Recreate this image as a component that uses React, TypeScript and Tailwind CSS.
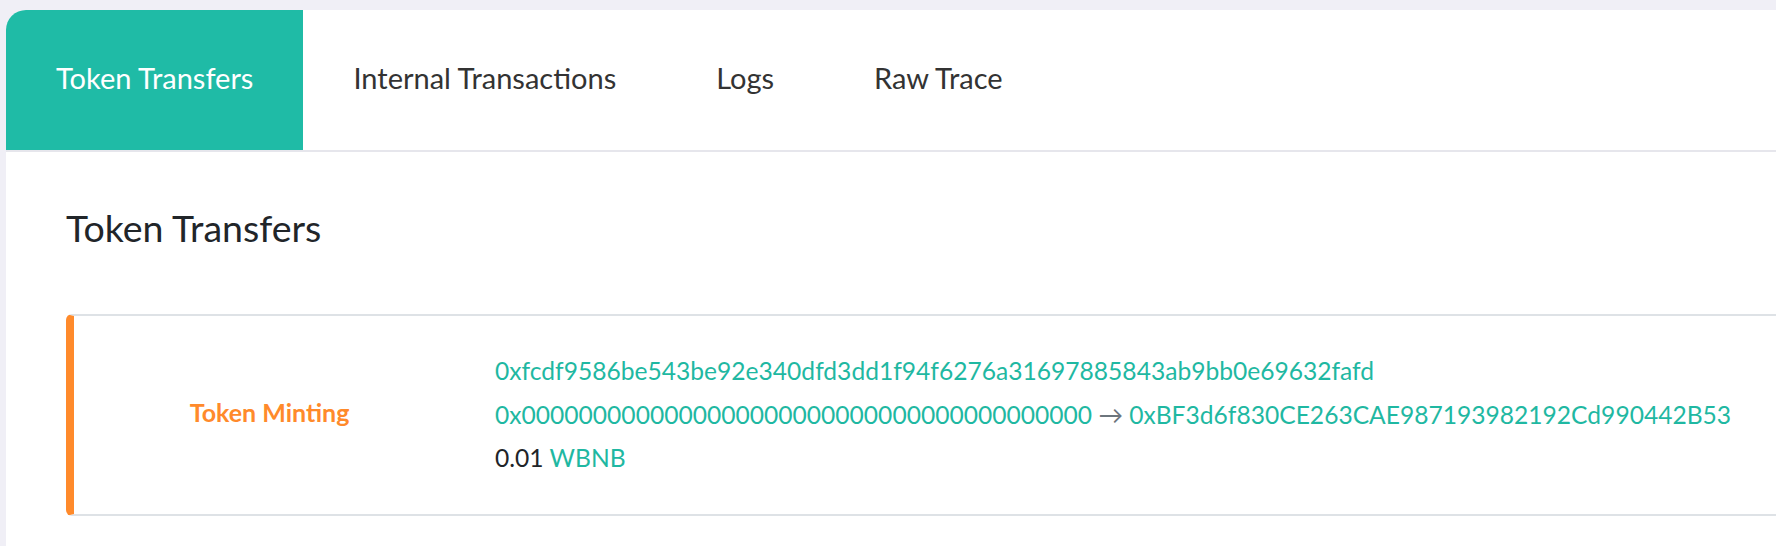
import React from 'react';

const tabs = ['Token Transfers', 'Internal Transactions', 'Logs', 'Raw Trace'];

const App: React.FC = () => {
  return (
    <div className="h-[546px] overflow-hidden bg-[#f0eff6] pt-[10px] pl-[6px] font-['Lato',sans-serif]">
      <div className="h-full bg-white rounded-tl-[20px]">
        {/* tab bar */}
        <div className="flex border-b-2 border-[#e6e6ec]">
          {tabs.map((tab, i) => (
            <div
              key={tab}
              className={
                i === 0
                  ? 'h-[140px] px-[50px] pb-[4px] flex items-center text-[29px] text-white bg-[#1fbba6] rounded-tl-[20px]'
                  : 'h-[140px] px-[50px] pb-[4px] flex items-center text-[29px] text-[#333333]'
              }
            >
              {tab}
            </div>
          ))}
        </div>

        <div className="pl-[60px] pt-[53px]">
          <h2 className="text-[37.5px] leading-[1.2] text-[#212529]">Token Transfers</h2>

          <div className="mt-[64px] -mr-6 flex border-y-2 border-r-2 border-[#dee2e6] rounded-l-[6px] border-l-[8px] border-l-[#ff8a2b]">
            <div className="w-[391px] pb-[5px] flex items-center justify-center">
              <span className="text-[25px] font-bold text-[#ff8a2b]">Token Minting</span>
            </div>
            <div className="pl-[30px] pt-[33px] pb-[34px] text-[24.6px] leading-[43.5px]">
              <div className="text-[#1fb8a2]">0xfcdf9586be543be92e340dfd3dd1f94f6276a31697885843ab9bb0e69632fafd</div>
              <div>
                <span className="text-[#1fb8a2]">0x0000000000000000000000000000000000000000</span>
                <span className="text-[#6c757d]"> → </span>
                <span className="text-[#1fb8a2]">0xBF3d6f830CE263CAE987193982192Cd990442B53</span>
              </div>
              <div>
                <span className="text-[#212529]">0.01 </span>
                <span className="text-[#1fb8a2]">WBNB</span>
              </div>
            </div>
          </div>
        </div>
      </div>
    </div>
  );
};

export default App;
